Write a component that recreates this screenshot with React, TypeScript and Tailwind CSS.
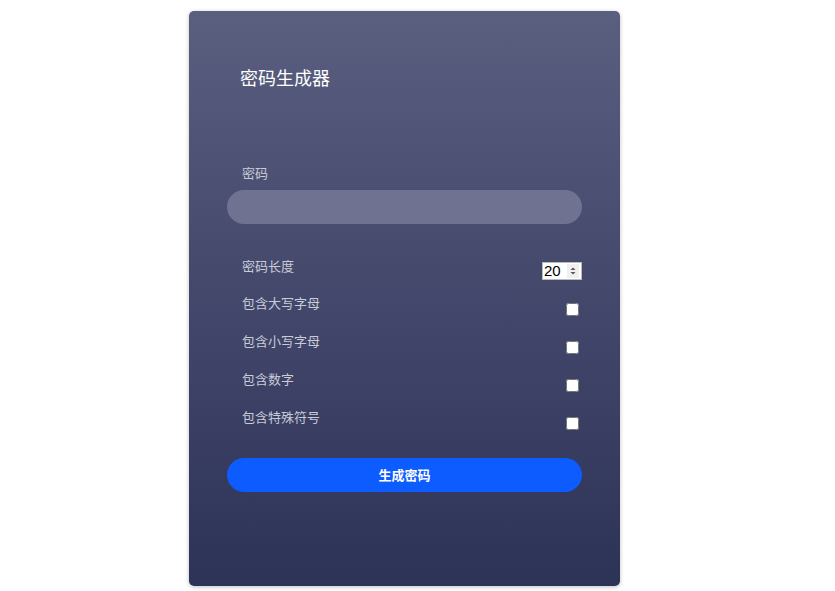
import { useState } from "react";

const font = { fontFamily: '"Noto Sans CJK SC", "Noto Sans", sans-serif' };

const options = ["包含大写字母", "包含小写字母", "包含数字", "包含特殊符号"];

export default function App() {
  const [length, setLength] = useState(20);
  const [checked, setChecked] = useState<boolean[]>([false, false, false, false]);

  return (
    <div className="min-h-[591px] bg-white" style={font}>
      <div className="ml-[189px] pt-[11px]">
        <div className="flex h-[575px] w-[431px] flex-col rounded-[5px] bg-gradient-to-b from-[#5a5f80] to-[#2d3257] px-[38px] pt-[54px] shadow-[0_1px_4px_rgba(0,0,0,0.25)]">
          <h1 className="pl-[13px] text-[18px] leading-6 text-white">密码生成器</h1>

          <div className="mt-[74px] pl-[15px] text-[13px] leading-5 text-[#c9cbd8]">密码</div>
          <input
            type="text"
            readOnly
            className="mt-[7px] h-[34px] w-full rounded-full bg-[#6f7290] px-4 text-sm text-white outline-none"
          />

          <div className="mt-[32px] flex items-start justify-between">
            <span className="pl-[15px] text-[13px] leading-5 text-[#c9cbd8]">密码长度</span>
            <div className="mt-[6px] flex h-[18px] w-[40px] items-center border border-[#bbb] bg-white pl-[1px]">
              <input
                type="text"
                value={length}
                onChange={(e) => setLength(Number(e.target.value) || 0)}
                className="w-[22px] bg-transparent text-[15px] leading-4 text-black outline-none"
                style={{ fontFamily: '"Liberation Sans", sans-serif' }}
              />
              <svg width="12" height="14" viewBox="0 0 12 14" className="ml-auto mr-[2px]">
                <rect width="12" height="14" fill="#f0f0f0" />
                <path d="M3.5 6 L6 3.5 L8.5 6 Z" fill="#555" />
                <path d="M3.5 8 L6 10.5 L8.5 8 Z" fill="#555" />
              </svg>
            </div>
          </div>

          {options.map((label, i) => (
            <div
              key={label}
              className={`${i === 0 ? "mt-[13px]" : "mt-[15px]"} flex items-start justify-between`}
            >
              <span className="pl-[15px] text-[13px] leading-5 text-[#c9cbd8]">{label}</span>
              <input
                type="checkbox"
                checked={checked[i]}
                onChange={() => setChecked((c) => c.map((v, j) => (j === i ? !v : v)))}
                className="mt-[10px] mr-[3px] h-[13px] w-[13px]"
              />
            </div>
          ))}

          <button
            type="button"
            className="mt-[28px] h-[34px] w-full rounded-full bg-[#0d5cff] text-[13px] font-bold text-white"
          >
            生成密码
          </button>
        </div>
      </div>
    </div>
  );
}
